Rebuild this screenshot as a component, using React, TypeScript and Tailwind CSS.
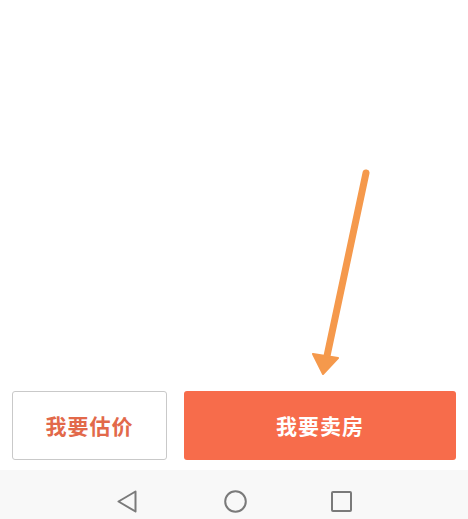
export default function App() {
  return (
    <div className="flex h-[519px] w-[468px] flex-col bg-white font-['Noto_Sans_CJK_SC',sans-serif]">
      {/* blank content area with the hand-drawn arrow */}
      <div className="h-[391px] w-full">
        <svg width="468" height="391" viewBox="0 0 468 391">
          <line x1="366" y1="173" x2="327" y2="356" stroke="#f5994c" strokeWidth="7" strokeLinecap="round" />
          <path d="M313 354 L338 358 L323 374 Z" fill="#f5994c" strokeLinejoin="round" stroke="#f5994c" strokeWidth="2" />
        </svg>
      </div>

      <div className="flex h-[69px] gap-[17px] px-3">
        <button className="flex w-[155px] items-center justify-center rounded-[3px] border border-[#c9c9c9] bg-white text-[21px] font-bold tracking-[1px] text-[#e2694a]">
          我要估价
        </button>
        <button className="flex flex-1 items-center justify-center rounded-[3px] bg-[#f76c4b] text-[21px] font-bold tracking-[1px] text-white">
          我要卖房
        </button>
      </div>

      <div className="mt-[10px] flex flex-1 items-center justify-center bg-[#f8f8f8] pt-[14px]">
        <svg width="20" height="23" viewBox="0 0 20 23">
          <path d="M18.5 1.5 L1.5 11.5 L18.5 21.5 Z" fill="none" stroke="#7a7a7a" strokeWidth="2" strokeLinejoin="round" />
        </svg>
        <svg className="ml-[87px]" width="23" height="23" viewBox="0 0 23 23">
          <circle cx="11.5" cy="11.5" r="10.3" fill="none" stroke="#7a7a7a" strokeWidth="2" />
        </svg>
        <svg className="ml-[84px]" width="21" height="21" viewBox="0 0 21 21">
          <rect x="1" y="1" width="19" height="19" rx="1" fill="none" stroke="#7a7a7a" strokeWidth="2" />
        </svg>
      </div>
    </div>
  )
}
